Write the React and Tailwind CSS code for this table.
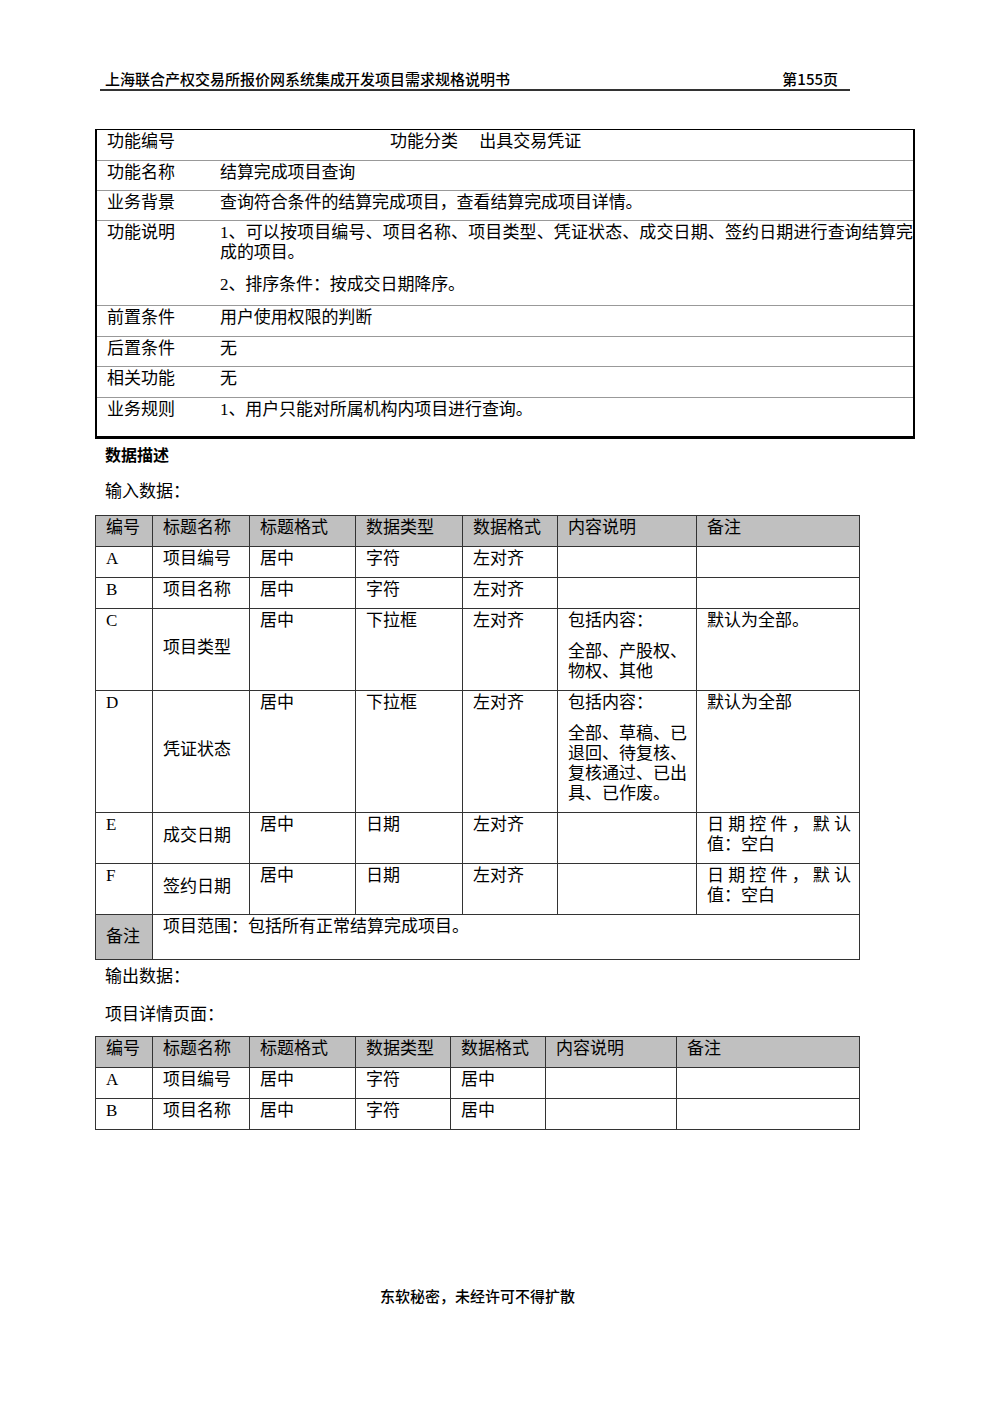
const serif = "font-['Liberation_Serif','Noto_Sans_CJK_SC',serif]";

const infoRows = [
  { label: "功能名称", value: ["结算完成项目查询"], h: "h-[30px]" },
  { label: "业务背景", value: ["查询符合条件的结算完成项目，查看结算完成项目详情。"], h: "h-[30px]" },
  {
    label: "功能说明",
    value: [
      "1、可以按项目编号、项目名称、项目类型、凭证状态、成交日期、签约日期进行查询结算完成的项目。",
      "2、排序条件：按成交日期降序。",
    ],
    h: "h-[85px]",
  },
  { label: "前置条件", value: ["用户使用权限的判断"], h: "h-[31px]" },
  { label: "后置条件", value: ["无"], h: "h-[30px]" },
  { label: "相关功能", value: ["无"], h: "h-[31px]" },
  { label: "业务规则", value: ["1、用户只能对所属机构内项目进行查询。"], h: "h-[38px]" },
];

const headers = ["编号", "标题名称", "标题格式", "数据类型", "数据格式", "内容说明", "备注"];

const inputRows = [
  { id: "A", name: "项目编号", fmt: "居中", type: "字符", align: "左对齐" },
  { id: "B", name: "项目名称", fmt: "居中", type: "字符", align: "左对齐" },
  {
    id: "C", name: "项目类型", fmt: "居中", type: "下拉框", align: "左对齐", mid: true,
    desc: ["包括内容：", "全部、产股权、物权、其他"], note: "默认为全部。",
  },
  {
    id: "D", name: "凭证状态", fmt: "居中", type: "下拉框", align: "左对齐", mid: true,
    desc: ["包括内容：", "全部、草稿、已退回、待复核、复核通过、已出具、已作废。"], note: "默认为全部",
  },
  { id: "E", name: "成交日期", fmt: "居中", type: "日期", align: "左对齐", mid: true, note: "日期控件，默认值：空白" },
  { id: "F", name: "签约日期", fmt: "居中", type: "日期", align: "左对齐", mid: true, note: "日期控件，默认值：空白" },
];

const outputRows = [
  { id: "A", name: "项目编号", fmt: "居中", type: "字符", align: "居中" },
  { id: "B", name: "项目名称", fmt: "居中", type: "字符", align: "居中" },
];

function Cell({ children, mid, className = "" }) {
  return (
    <td
      className={`border border-[#333] pl-[10px] pr-[8px] ${mid ? "align-middle pt-[4px] pb-[8px]" : "align-top pt-[2px] pb-[8px]"} ${className}`}
    >
      {children}
    </td>
  );
}

function DataTable({ rows, widths, remark }) {
  return (
    <table className="w-[764px] border-collapse table-fixed border border-[#333]">
      <colgroup>
        {widths.map((w, i) => (
          <col key={i} style={{ width: w }} />
        ))}
      </colgroup>
      <thead>
        <tr className="bg-[#c0c0c0] h-[31px]">
          {headers.map((h) => (
            <th key={h} className="border border-[#333] align-top text-left font-normal pl-[10px] pt-[2px]">
              {h}
            </th>
          ))}
        </tr>
      </thead>
      <tbody>
        {rows.map((r) => (
          <tr key={r.id} className="h-[31px]">
            <Cell>{r.id}</Cell>
            <Cell mid={r.mid}>{r.name}</Cell>
            <Cell>{r.fmt}</Cell>
            <Cell>{r.type}</Cell>
            <Cell>{r.align}</Cell>
            <Cell>
              {r.desc && (
                <>
                  <p>{r.desc[0]}</p>
                  <p className="mt-[11px]">{r.desc[1]}</p>
                </>
              )}
            </Cell>
            <Cell className="text-justify">{r.note}</Cell>
          </tr>
        ))}
        {remark && (
          <tr className="h-[45px]">
            <td className="border border-[#333] bg-[#c0c0c0] pl-[10px] align-middle">备注</td>
            <td colSpan={6} className="border border-[#333] align-top pl-[10px] pt-[2px]">
              {remark}
            </td>
          </tr>
        )}
      </tbody>
    </table>
  );
}

export default function App() {
  return (
    <div className={`w-[1000px] h-[1415px] bg-white text-black relative ${serif} text-[17px] leading-[20px]`}>
      {/* page header */}
      <div className="pt-[70px] pl-[100px] w-[850px]">
        <div className="flex justify-between items-end border-b-2 border-[#333] pb-[1px] font-['Noto_Sans_CJK_SC',sans-serif] font-medium text-[15px] leading-[18px]">
          <span className="pl-[5px]">上海联合产权交易所报价网系统集成开发项目需求规格说明书</span>
          <span className="pr-[12px]">第155页</span>
        </div>
      </div>

      {/* function table */}
      <div className="ml-[95px] mt-[38px] w-[820px] border-t border-l-2 border-r-2 border-b-[3px] border-black">
        <div className="flex h-[31px] border-b border-[#999] pt-[2px]">
          <div className="w-[118px] pl-[10px]">功能编号</div>
          <div className="pl-[175px]">功能分类　 出具交易凭证</div>
        </div>
        {infoRows.map((r, i) => {
          const last = i === infoRows.length - 1;
          return (
            <div key={r.label} className={`flex pt-[2px] ${r.h} ${last ? "" : "border-b border-[#999]"}`}>
              <div className="w-[118px] shrink-0 pl-[10px]">{r.label}</div>
              <div className="pl-[5px] pr-0 flex-1 text-justify tracking-[-0.1px]">
                {r.value.map((v, j) => (
                  <p key={j} className={j > 0 ? "mt-[12px]" : ""}>
                    {v}
                  </p>
                ))}
              </div>
            </div>
          );
        })}
      </div>

      {/* data description */}
      <div className="pl-[105px]">
        <div className="mt-[5px] font-['Noto_Sans_CJK_SC',sans-serif] font-bold text-[16px] leading-[20px]">数据描述</div>
        <div className="mt-[18px]">输入数据：</div>
      </div>

      <div className="ml-[95px] mt-[13px]">
        <DataTable
          rows={inputRows}
          widths={["57px", "97px", "106px", "107px", "95px", "139px", "163px"]}
          remark="项目范围：包括所有正常结算完成项目。"
        />
      </div>

      <div className="pl-[105px]">
        <div className="mt-[7px]">输出数据：</div>
        <div className="mt-[18px]">项目详情页面：</div>
      </div>

      <div className="ml-[95px] mt-[11px]">
        <DataTable
          rows={outputRows}
          widths={["57px", "97px", "106px", "95px", "95px", "131px", "183px"]}
        />
      </div>

      {/* footer */}
      <div className="absolute left-0 right-0 top-[1286px] text-center font-['Noto_Sans_CJK_SC',sans-serif] font-medium text-[15px] leading-[20px]">
        <span className="ml-[-45px]">东软秘密，未经许可不得扩散</span>
      </div>
    </div>
  );
}
